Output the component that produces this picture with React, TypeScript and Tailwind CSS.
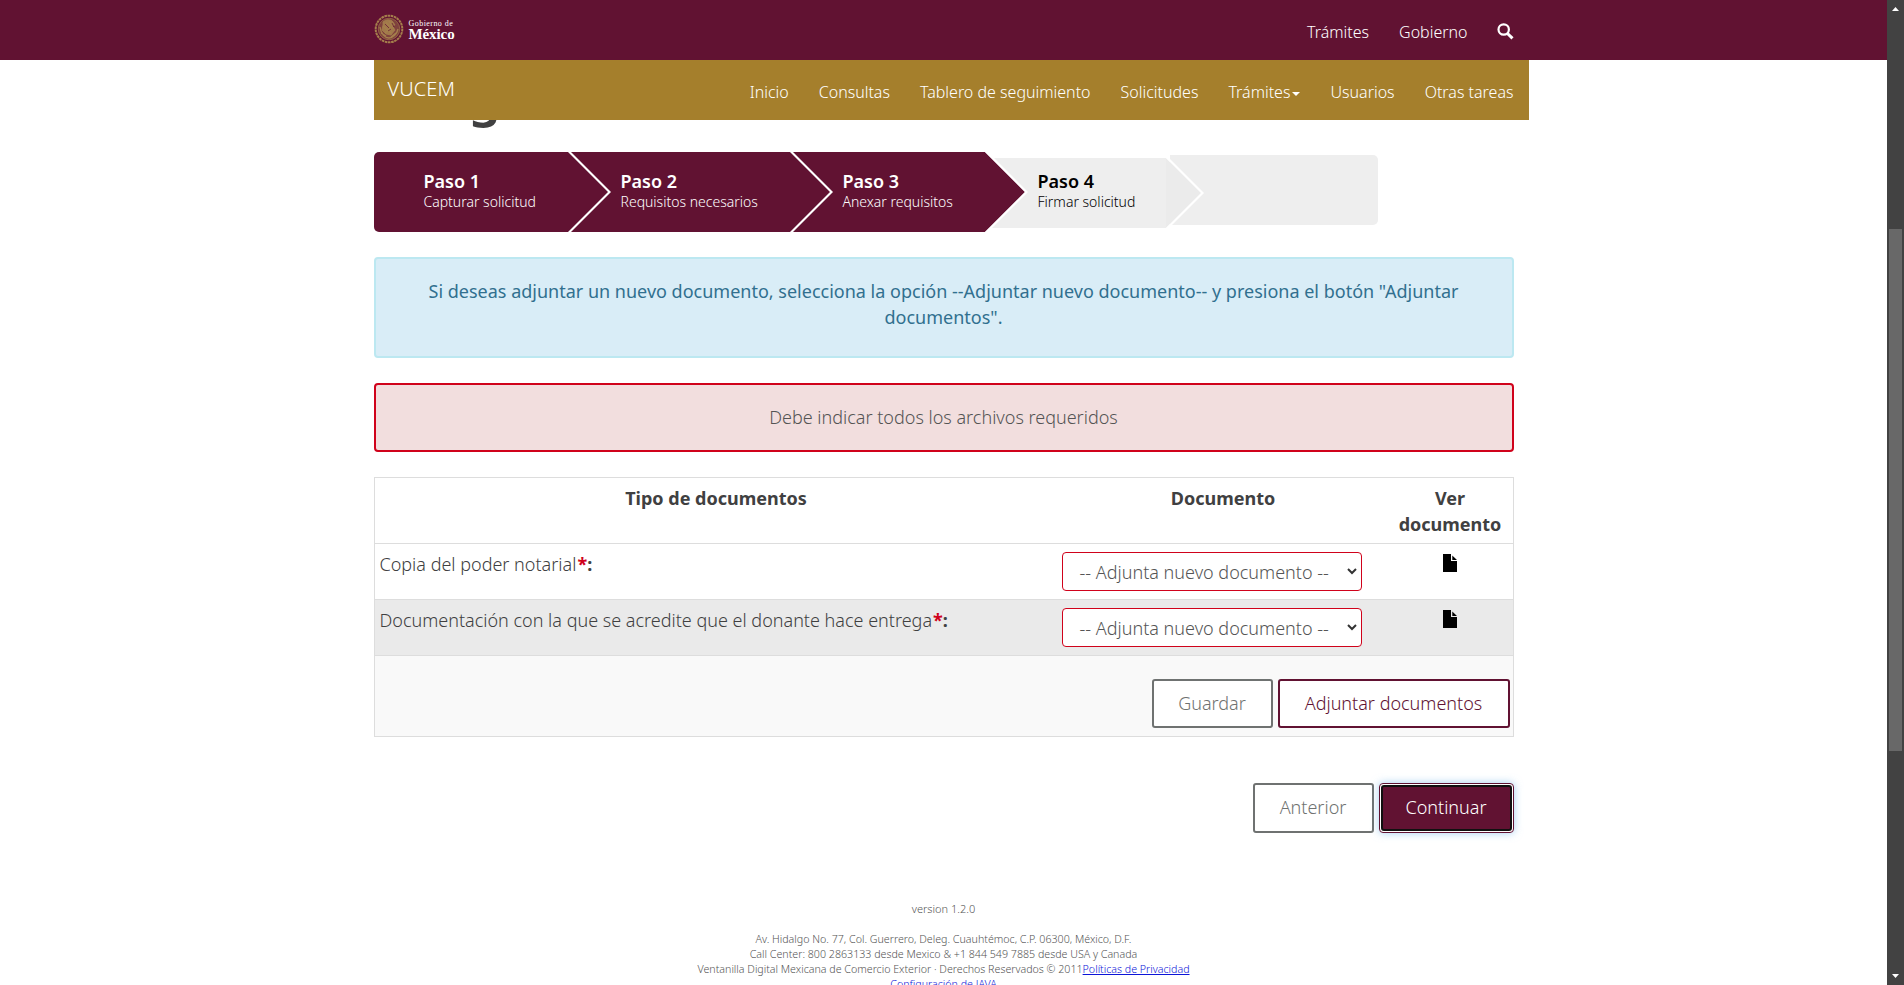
import React from "react";

const NAV = ["Inicio", "Consultas", "Tablero de seguimiento", "Solicitudes", "Trámites", "Usuarios", "Otras tareas"];
const ROWS = ["Copia del poder notarial", "Documentación con la que se acredite que el donante hace entrega"];

function Seal() {
  return (
    <svg width="30" height="30" viewBox="0 0 30 30" fill="none" stroke="#a57f4c">
      <circle cx="15" cy="15" r="13.300" strokeWidth="2" strokeDasharray="2.6 .6" />
      <circle cx="15" cy="15" r="10.800" fill="#a57f4c" fillOpacity=".45" strokeWidth=".6" />
      <path d="M9 8c3-3 8-3 10 0l2 3-3 1 3 4-4 5-5-1-4-4 1-5z" fill="#a57f4c" fillOpacity=".9" strokeWidth=".8" />
      <path d="M6 13c1 7 5 11 9 11s8-4 9-9M7 19l5 3M17 23l5-4M12 8l5 6-6 5M15 7l5 8M9 12l8 7" strokeWidth="1.4" />
      <path d="M11 10l4 4M14 17l3-2M18 9l2 4" stroke="#611232" strokeWidth=".7" />
    </svg>
  );
}

function Arrow({ fill, h }: { fill: string; h: number }) {
  const tip = h / 2;
  return (
    <svg className="absolute left-full top-0 z-10" width="46" height={h} viewBox={`0 0 46 ${h}`}>
      <path d={`M0 0L${tip} ${tip}L0 ${h}Z`} fill={fill} />
      <path d={`M0 0H3L${tip + 3} ${tip}L3 ${h}H0L${tip} ${tip}Z`} fill="#fff" />
    </svg>
  );
}

function StepText({ title, sub }: { title: string; sub: string }) {
  return (
    <div className="whitespace-nowrap">
      <div className="text-[18px] leading-[22px] font-semibold">{title}</div>
      <div className="text-[14px] leading-[20px] font-light">{sub}</div>
    </div>
  );
}

function Select() {
  return (
    <div className="flex h-[39px] w-[300px] items-center justify-between rounded-[4px] border border-[#d0021b] bg-white pl-[17px] pr-[4px] text-[#555]">
      <span className="whitespace-nowrap pt-px">-- Adjunta nuevo documento --</span>
      <svg width="10" height="7" viewBox="0 0 10 7" fill="none" stroke="#333" strokeWidth="2" className="mb-px">
        <path d="M1 1l4 4 4-4" />
      </svg>
    </div>
  );
}

function FileIcon() {
  return (
    <svg width="14" height="18" viewBox="0 0 14 18" className="ml-[54px] mt-[10px]">
      <path d="M0 0H8V7H14V18H0ZM9.300 1.500L14 6H9.300Z" fill="#000" />
    </svg>
  );
}

export default function App() {
  return (
    <div className="flex h-[985px] w-full overflow-hidden bg-white font-['Noto_Sans',sans-serif] text-[18px] leading-[26px] font-light text-[#404041]">
      <div className="h-full w-[1887px] overflow-hidden">
        <header className="h-[60px] bg-[#611232]">
          <div className="mx-auto flex h-full w-[1140px] justify-between text-white">
            <div className="flex items-start pt-[14px]">
              <Seal />
              <div className="ml-[5px] pt-[5px] font-['Liberation_Serif',serif] font-normal">
                <div className="text-[8px] leading-[10px] tracking-[0.45px]">Gobierno de</div>
                <div className="text-[15px] leading-[10px] font-bold tracking-[-0.1px]">México</div>
              </div>
            </div>
            <nav className="flex items-start pt-[19px] text-[16px]">
              <span className="mr-[30px]">Trámites</span>
              <span className="mr-[29px]">Gobierno</span>
              <svg width="17" height="17" viewBox="0 0 17 17" fill="none" stroke="#fff" className="mt-[4px]">
                <circle cx="6.700" cy="6.500" r="5.200" strokeWidth="2.200" />
                <path d="M10.500 10.500L15.500 15.300" strokeWidth="3" />
              </svg>
            </nav>
          </div>
        </header>

        <div className="mx-auto w-[1140px]">
          <div className="flex h-[60px] w-[1155px] justify-between bg-[#a57f2c] pl-[14px] pr-[15px] text-white">
            <div className="pt-[16px] text-[20px] tracking-[0.1px]">VUCEM</div>
            <nav className="flex gap-[30px] pt-[19px] text-[16px]">
              {NAV.map((n) => (
                <span key={n} className="flex items-center self-start whitespace-nowrap">
                  {n}
                  {n === "Trámites" && (
                    <span className="ml-[2px] mt-[3px] border-x-4 border-t-4 border-x-transparent border-t-white" />
                  )}
                </span>
              ))}
            </nav>
          </div>

          <div className="flex h-[32px] items-end overflow-hidden">
            <h1 className="mb-[31px] ml-[95px] text-[52px] leading-[53px] font-semibold">g</h1>
          </div>

          <div className="flex h-[80px] items-start">
            <div className="relative h-[80px] w-[194px] rounded-l-[5px] bg-[#611232] pl-[50px] pt-[18px] text-white">
              <StepText title="Paso 1" sub="Capturar solicitud" />
              <Arrow fill="#611232" h={80} />
            </div>
            <div className="relative h-[80px] w-[222px] bg-[#611232] pl-[53px] pt-[18px] text-white">
              <StepText title="Paso 2" sub="Requisitos necesarios" />
              <Arrow fill="#611232" h={80} />
            </div>
            <div className="relative h-[80px] w-[195px] bg-[#611232] pl-[53px] pt-[18px] text-white">
              <StepText title="Paso 3" sub="Anexar requisitos" />
              <Arrow fill="#611232" h={80} />
            </div>
            <div className="relative mt-[6px] h-[70px] w-[181px] bg-[#eee] pl-[53px] pt-[12px] text-black">
              <StepText title="Paso 4" sub="Firmar solicitud" />
              <Arrow fill="#ebebeb" h={70} />
            </div>
            <div className="ml-[4px] mt-[3px] h-[70px] w-[208px] rounded-r-[5px] bg-[#eee]" />
          </div>

          <div className="mt-[25px] h-[101px] rounded-[4px] border-2 border-[#bce8f1] bg-[#d9edf7] px-[50px] pt-[19px] text-center font-normal text-[#31708f]">
            Si deseas adjuntar un nuevo documento, selecciona la opción --Adjuntar nuevo documento-- y presiona el botón "Adjuntar documentos".
          </div>
          <div className="mt-[25px] flex h-[69px] items-center justify-center rounded-[4px] border-2 border-[#d0021b] bg-[#f2dede] pb-[2px] text-[#545454]">
            Debe indicar todos los archivos requeridos
          </div>

          <div className="mt-[25px] border border-[#ddd]">
            <div className="grid h-[65px] grid-cols-[683px_331px_123px] pt-[7px] text-center font-bold">
              <div>Tipo de documentos</div>
              <div>Documento</div>
              <div>Ver documento</div>
            </div>
            {ROWS.map((r, i) => (
              <div
                key={r}
                className={
                  i
                    ? "grid h-[56px] grid-cols-[683px_331px_124px] border-t border-[#ddd] bg-[#eaeaea]"
                    : "grid h-[56px] grid-cols-[683px_331px_124px] border-t border-[#ddd]"
                }
              >
                <div className="pl-[5px] pt-[7px]">
                  {r}
                  <b className="ml-px font-bold text-[#d0021b]">*</b>
                  <b className="font-bold">:</b>
                </div>
                <div className="pl-[4px] pt-[8px]">
                  <Select />
                </div>
                <div>
                  <FileIcon />
                </div>
              </div>
            ))}
            <div className="flex h-[81px] justify-end gap-[5px] border-t border-[#ddd] bg-[#f9f9f9] pr-[3px] pt-[23px]">
              <button className="h-[49px] w-[121px] rounded-[3px] border-2 border-[#6f7271] bg-white pb-[2px] text-[#6f7271]">Guardar</button>
              <button className="h-[49px] w-[232px] rounded-[3px] border-2 border-[#611232] bg-white pb-[2px] text-[#611232]">Adjuntar documentos</button>
            </div>
          </div>

          <div className="mt-[46px] flex justify-end gap-[5px]">
            <button className="h-[50px] w-[121px] rounded-[3px] border-2 border-[#6f7271] bg-white pb-[2px] text-[#6f7271]">Anterior</button>
            <button className="h-[50px] w-[135px] rounded-[4px] border border-[#611232] bg-white p-px shadow-[0_0_8px_rgba(102,175,233,0.6)]">
              <span className="flex h-full items-center justify-center rounded-[3px] border-2 border-[#101010] bg-[#611232] pb-[2px] text-white">Continuar</span>
            </button>
          </div>

          <footer className="mt-[68px] text-center text-[10.66px] leading-[15px] whitespace-nowrap text-[#545454]">
            <div className="text-[11px]">version 1.2.0</div>
            <div className="mt-[16px]">Av. Hidalgo No. 77, Col. Guerrero, Deleg. Cuauhtémoc, C.P. 06300, México, D.F.</div>
            <div>Call Center: 800 2863133 desde Mexico &amp; +1 844 549 7885 desde USA y Canada</div>
            <div>
              Ventanilla Digital Mexicana de Comercio Exterior · Derechos Reservados © 2011
              <a className="text-[#0c15d8] underline">Políticas de Privacidad</a>
            </div>
            <div>
              <a className="text-[#0c15d8] underline">Configuración de JAVA</a>
            </div>
          </footer>
        </div>
      </div>

      <div className="flex h-full w-[17px] flex-col items-center bg-[#424242]">
        <svg width="7" height="4" viewBox="0 0 7 4" className="mt-[7px] shrink-0">
          <path d="M0 4L3.500 0L7 4Z" fill="#fff" />
        </svg>
        <div className="mt-[218px] h-[522px] w-[13px] shrink-0 bg-[#686868]" />
        <svg width="7" height="4" viewBox="0 0 7 4" className="mt-[223px] shrink-0">
          <path d="M0 0H7L3.500 4Z" fill="#fff" />
        </svg>
      </div>
    </div>
  );
}
